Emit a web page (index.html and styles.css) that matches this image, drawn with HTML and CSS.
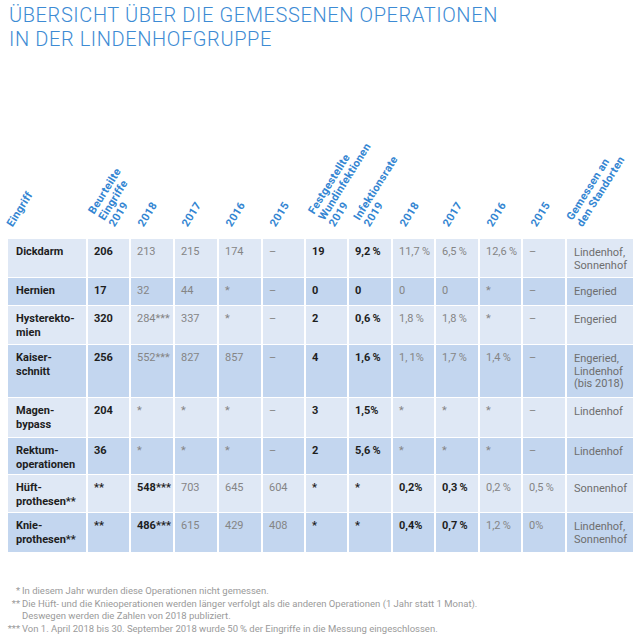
FILE: index.html
```html
<!DOCTYPE html>
<html lang="de">
<head>
<meta charset="utf-8">
<title>Übersicht über die gemessenen Operationen</title>
<link rel="stylesheet" href="styles.css">
</head>
<body>
<div class="page">
  <h1 class="title">ÜBERSICHT ÜBER DIE GEMESSENEN OPERATIONEN<br>IN DER LINDENHOFGRUPPE</h1>

  <div class="grid head">
    <div class="hc o5"><span class="lbl">Eingriff</span></div>
    <div class="hc o27"><span class="lbl">Beurteilte<br>Eingriffe<br>2019</span></div>
    <div class="hc o13"><span class="lbl">2018</span></div>
    <div class="hc o13"><span class="lbl">2017</span></div>
    <div class="hc o13"><span class="lbl">2016</span></div>
    <div class="hc o13"><span class="lbl">2015</span></div>
    <div class="hc o28"><span class="lbl">Festgestellte<br>Wundinfektionen<br>2019</span></div>
    <div class="hc o20"><span class="lbl">Infektionsrate<br>2019</span></div>
    <div class="hc o13"><span class="lbl">2018</span></div>
    <div class="hc o13"><span class="lbl">2017</span></div>
    <div class="hc o13"><span class="lbl">2016</span></div>
    <div class="hc o14"><span class="lbl">2015</span></div>
    <div class="hc o15"><span class="lbl">Gemessen an<br>den Standorten</span></div>
  </div>

  <div class="grid body">
    <div class="c name a">Dickdarm</div><div class="c b a">206</div><div class="c a">213</div><div class="c a">215</div><div class="c a">174</div><div class="c a">–</div><div class="c b a">19</div><div class="c b a">9,2&#8201;%</div><div class="c a">11,7&#8201;%</div><div class="c a">6,5&#8201;%</div><div class="c a">12,6&#8201;%</div><div class="c a">–</div><div class="c loc a">Lindenhof,<br>Sonnenhof</div>

    <div class="c name d">Hernien</div><div class="c b d">17</div><div class="c d">32</div><div class="c d">44</div><div class="c d">*</div><div class="c d">–</div><div class="c b d">0</div><div class="c b d">0</div><div class="c d">0</div><div class="c d">0</div><div class="c d">*</div><div class="c d">–</div><div class="c loc d">Engeried</div>

    <div class="c name a">Hysterekto-<br>mien</div><div class="c b a">320</div><div class="c a">284***</div><div class="c a">337</div><div class="c a">*</div><div class="c a">–</div><div class="c b a">2</div><div class="c b a">0,6&#8201;%</div><div class="c a">1,8&#8201;%</div><div class="c a">1,8&#8201;%</div><div class="c a">*</div><div class="c a">–</div><div class="c loc a">Engeried</div>

    <div class="c name d">Kaiser-<br>schnitt</div><div class="c b d">256</div><div class="c d">552***</div><div class="c d">827</div><div class="c d">857</div><div class="c d">–</div><div class="c b d">4</div><div class="c b d">1,6&#8201;%</div><div class="c d">1,&#8201;1%</div><div class="c d">1,7&#8201;%</div><div class="c d">1,4&#8201;%</div><div class="c d">–</div><div class="c loc d">Engeried,<br>Lindenhof<br>(bis 2018)</div>

    <div class="c name a">Magen-<br>bypass</div><div class="c b a">204</div><div class="c a">*</div><div class="c a">*</div><div class="c a">*</div><div class="c a">–</div><div class="c b a">3</div><div class="c b a">1,5%</div><div class="c a">*</div><div class="c a">*</div><div class="c a">*</div><div class="c a">–</div><div class="c loc a">Lindenhof</div>

    <div class="c name d">Rektum-<br>operationen</div><div class="c b d">36</div><div class="c d">*</div><div class="c d">*</div><div class="c d">*</div><div class="c d">–</div><div class="c b d">2</div><div class="c b d">5,6&#8201;%</div><div class="c d">*</div><div class="c d">*</div><div class="c d">*</div><div class="c d">–</div><div class="c loc d">Lindenhof</div>

    <div class="c name a">Hüft-<br>prothesen**</div><div class="c b a">**</div><div class="c b a">548***</div><div class="c a">703</div><div class="c a">645</div><div class="c a">604</div><div class="c b a">*</div><div class="c b a">*</div><div class="c b a">0,2%</div><div class="c b a">0,3&#8201;%</div><div class="c a">0,2&#8201;%</div><div class="c a">0,5&#8201;%</div><div class="c loc a">Sonnenhof</div>

    <div class="c name d">Knie-<br>prothesen**</div><div class="c b d">**</div><div class="c b d">486***</div><div class="c d">615</div><div class="c d">429</div><div class="c d">408</div><div class="c b d">*</div><div class="c b d">*</div><div class="c b d">0,4%</div><div class="c b d">0,7&#8201;%</div><div class="c d">1,2&#8201;%</div><div class="c d">0%</div><div class="c loc d">Lindenhof,<br>Sonnenhof</div>
  </div>

  <div class="notes">
    <span class="mk">*</span><span class="nt">In diesem Jahr wurden diese Operationen nicht gemessen.</span>
    <span class="mk">**</span><span class="nt">Die Hüft- und die Knieoperationen werden länger verfolgt als die anderen Operationen (1 Jahr statt 1 Monat).<br>Deswegen werden die Zahlen von 2018 publiziert.</span>
    <span class="mk">***</span><span class="nt">Von 1. April 2018 bis 30. September 2018 wurde 50&#8201;% der Eingriffe in die Messung eingeschlossen.</span>
  </div>
</div>
</body>
</html>
```

FILE: styles.css
```css
html, body {
  margin: 0;
  padding: 0;
  background: #ffffff;
}

body {
  font-family: Roboto, "Liberation Sans", sans-serif;
  color: #222;
}

.page {
  padding: 3px 7px 0 8px;
}

.title {
  margin: 0 0 88px 0;
  font-size: 20px;
  line-height: 24px;
  font-weight: 300;
  color: #3d8bd4;
  letter-spacing: 0.6px;
  padding-left: 1px;
}

.grid {
  display: grid;
  grid-template-columns: 78px 41px 42px 42px 42px 41px 41px 42px 41px 42px 41px 42px 66px;
  column-gap: 2px;
}

.head {
  height: 100px;
}

.hc {
  display: flex;
  align-items: flex-end;
  padding-bottom: 10px;
  box-sizing: border-box;
}

.lbl {
  display: inline-block;
  white-space: nowrap;
  font-size: 11px;
  line-height: 12px;
  font-weight: 700;
  letter-spacing: 0.3px;
  color: #3385d2;
  transform: rotate(-58deg);
  transform-origin: 0 100%;
}

.o5 { padding-left: 7px; }
.o13 { padding-left: 15px; }
.o14 { padding-left: 16px; }
.o15 { padding-left: 18px; }
.o20 { padding-left: 23px; }
.o27 { padding-left: 29px; }
.o28 { padding-left: 31px; }

.body {
  grid-template-rows: 38px 27px 38px 52px 39px 36px 37px 39px;
  row-gap: 1px;
}

.c {
  font-size: 11px;
  line-height: 14px;
  padding: 6px 0 0 6px;
  color: #858585;
  white-space: nowrap;
}

.a { background: #dfe8f5; }
.d { background: #c3d6ef; }

.b {
  font-weight: 700;
  color: #1e1e1e;
}

.name {
  font-weight: 700;
  color: #1e1e1e;
  padding-left: 8px;
}

.loc {
  line-height: 12.5px;
  padding-top: 8px;
  padding-left: 7px;
  color: #6e6e6e;
}

.notes {
  margin: 33px 0 0 -8px;
  display: grid;
  grid-template-columns: 20px 1fr;
  column-gap: 2px;
  font-size: 9.5px;
  line-height: 12.6px;
  color: #9a9a9a;
}

.mk {
  text-align: right;
}
```
